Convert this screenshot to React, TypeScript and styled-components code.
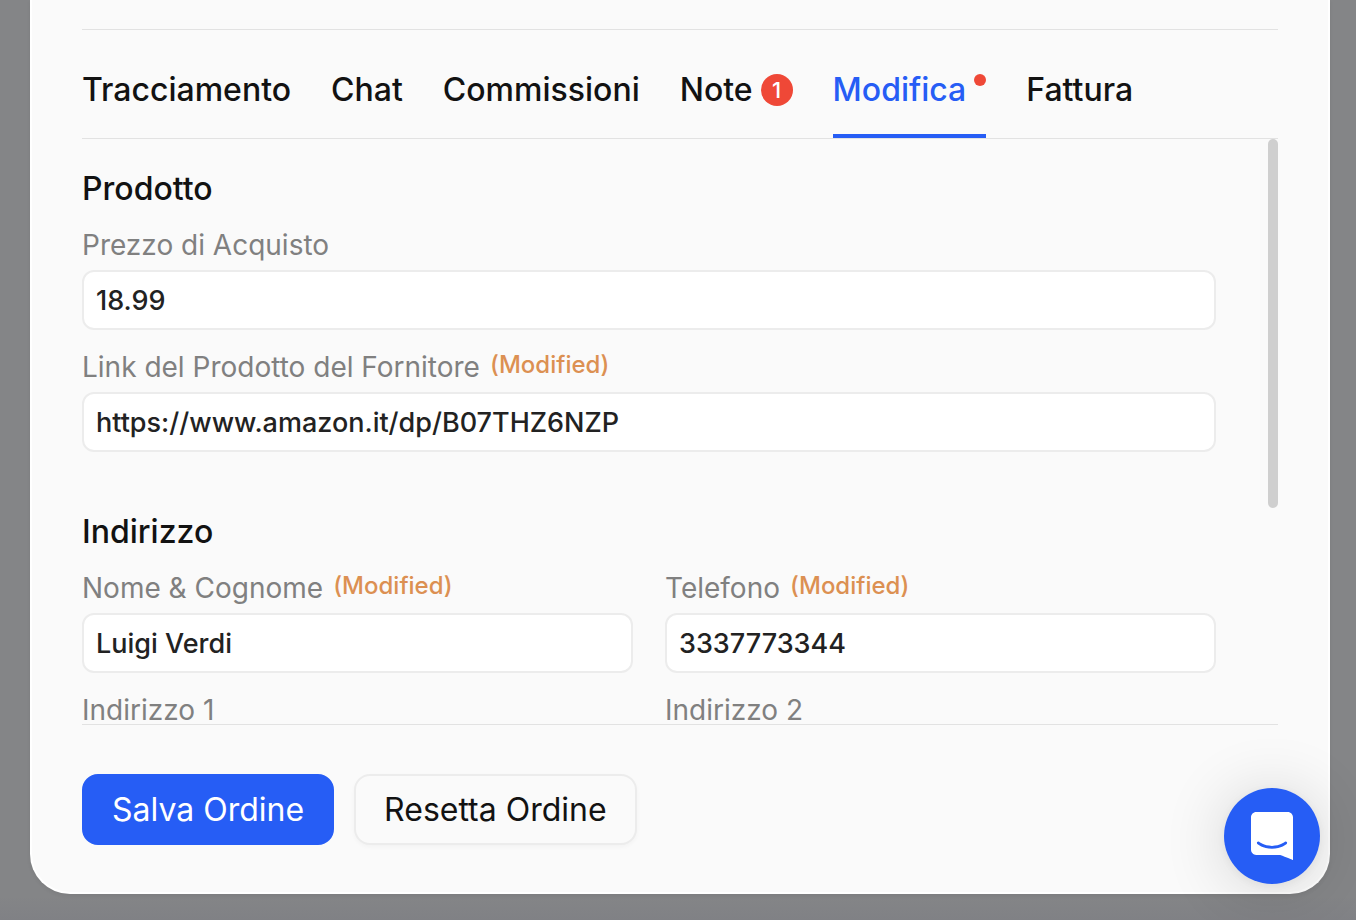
import React, { useState } from "react";
import styled, { createGlobalStyle, css } from "styled-components";

const GlobalStyle = createGlobalStyle`
  *, *::before, *::after { box-sizing: border-box; }
  body {
    margin: 0;
    background: #848587;
    font-family: Inter, "Liberation Sans", sans-serif;
    font-variant-ligatures: none;
    color: #121212;
    -webkit-font-smoothing: antialiased;
  }
  button, input {
    font-family: inherit;
    font-variant-ligatures: inherit;
  }
`;

const Backdrop = styled.div`
  min-height: 100vh;
  padding: 0 26px 26px 30px;
  background: linear-gradient(to bottom, #848587 0, #848587 calc(100% - 24px), #808185 100%);
`;

const Dialog = styled.main`
  display: flex;
  flex-direction: column;
  height: calc(100vh - 26px);
  padding: 0 50px 47px;
  background: #fafafa;
  border: 2px solid #ffffff;
  border-top: 0;
  border-radius: 0 0 40px 40px;
  box-shadow: 0 2px 4px rgba(0, 0, 0, 0.06);
`;

const Tabs = styled.div`
  display: flex;
  flex: none;
  gap: 40px;
  margin-top: 29px;
  border-top: 1px solid #e2e2e2;
  border-bottom: 1px solid #e2e2e2;
`;

const Tab = styled.button<{ $active: boolean }>`
  display: flex;
  align-items: center;
  gap: 8px;
  height: 108px;
  padding: 16px 0 0;
  border: 0;
  border-bottom: 4px solid transparent;
  background: none;
  color: #121212;
  font-size: 32px;
  line-height: 40px;
  font-weight: 500;
  white-space: nowrap;
  cursor: pointer;
  ${({ $active }) =>
    $active &&
    css`
      color: #265df5;
      border-bottom-color: #265df5;
    `}
`;

const Count = styled.span`
  display: grid;
  place-items: center;
  width: 32px;
  height: 32px;
  border-radius: 50%;
  background: #ef4837;
  color: #ffffff;
  font-size: 22px;
  line-height: 32px;
`;

const Dot = styled.span`
  width: 12px;
  height: 12px;
  margin-bottom: 20px;
  border-radius: 50%;
  background: #ef4837;
`;

const Body = styled.div`
  display: flex;
  flex: 1;
  gap: 52px;
  min-height: 0;
  border-bottom: 1px solid #e2e2e2;
`;

const Form = styled.form`
  flex: 1;
  min-width: 0;
  overflow: hidden;
  padding-top: 30px;
`;

const ScrollThumb = styled.div`
  width: 10px;
  height: 63%;
  border-radius: 5px;
  background: #cfcfcf;
`;

const Section = styled.section`
  margin-bottom: 60px;
`;

const Heading = styled.h2`
  margin: 0 0 19px;
  font-size: 32px;
  line-height: 40px;
  font-weight: 500;
`;

const Fields = styled.div<{ $columns: number }>`
  display: grid;
  grid-template-columns: repeat(${({ $columns }) => $columns}, minmax(0, 1fr));
  gap: 20px 32px;
`;

const FieldBox = styled.div`
  display: flex;
  flex-direction: column;
  gap: 8px;
`;

const LabelRow = styled.label`
  display: flex;
  align-items: flex-start;
  gap: 10px;
  color: #808080;
  font-size: 28px;
  line-height: 34px;
  white-space: nowrap;
`;

const Modified = styled.span`
  color: #dc9052;
  font-size: 24px;
  line-height: 30px;
  font-weight: 500;
`;

const TextInput = styled.input`
  width: 100%;
  height: 60px;
  padding: 0 12px;
  border: 2px solid #ececec;
  border-radius: 12px;
  background: #ffffff;
  color: #222222;
  font-size: 27px;
  font-weight: 500;
  outline: none;
`;

const Actions = styled.div`
  display: flex;
  flex: none;
  gap: 20px;
  padding-top: 49px;
`;

const ActionButton = styled.button<{ $primary?: boolean }>`
  padding: 14px 28px;
  border: 2px solid ${({ $primary }) => ($primary ? "#265df5" : "#ececec")};
  border-radius: 16px;
  background: ${({ $primary }) => ($primary ? "#265df5" : "#fafafa")};
  box-shadow: ${({ $primary }) => ($primary ? "none" : "0 2px 4px rgba(0, 0, 0, 0.03)")};
  color: ${({ $primary }) => ($primary ? "#ffffff" : "#121212")};
  font-size: 32px;
  line-height: 39px;
  white-space: nowrap;
  cursor: pointer;
`;

const Launcher = styled.button`
  position: fixed;
  right: 36px;
  bottom: 36px;
  display: grid;
  place-items: center;
  width: 96px;
  height: 96px;
  padding: 0;
  border: 0;
  border-radius: 50%;
  background: #265df5;
  box-shadow: 0 2px 12px rgba(0, 0, 0, 0.06), 0 4px 64px rgba(0, 0, 0, 0.16);
  cursor: pointer;
`;

const tabs = [
  { name: "Tracciamento" },
  { name: "Chat" },
  { name: "Commissioni" },
  { name: "Note", count: 1 },
  { name: "Modifica", changed: true },
  { name: "Fattura" },
];

type FieldProps = { id: string; label: string; value?: string; modified?: boolean };

function Field({ id, label, value = "", modified }: FieldProps) {
  return (
    <FieldBox>
      <LabelRow htmlFor={id}>
        {label}
        {modified && <Modified>(Modified)</Modified>}
      </LabelRow>
      <TextInput id={id} type="text" defaultValue={value} />
    </FieldBox>
  );
}

export default function App() {
  const [active, setActive] = useState("Modifica");
  return (
    <>
      <GlobalStyle />
      <Backdrop>
        <Dialog>
          <Tabs role="tablist">
            {tabs.map((tab) => (
              <Tab
                key={tab.name}
                type="button"
                role="tab"
                aria-selected={tab.name === active}
                $active={tab.name === active}
                onClick={() => setActive(tab.name)}
              >
                {tab.name}
                {tab.count && <Count>{tab.count}</Count>}
                {tab.changed && <Dot />}
              </Tab>
            ))}
          </Tabs>
          <Body>
            <Form id="order">
              <Section>
                <Heading>Prodotto</Heading>
                <Fields $columns={1}>
                  <Field id="price" label="Prezzo di Acquisto" value="18.99" />
                  <Field
                    id="link"
                    label="Link del Prodotto del Fornitore"
                    value="https://www.amazon.it/dp/B07THZ6NZP"
                    modified
                  />
                </Fields>
              </Section>
              <Section>
                <Heading>Indirizzo</Heading>
                <Fields $columns={2}>
                  <Field id="name" label="Nome & Cognome" value="Luigi Verdi" modified />
                  <Field id="phone" label="Telefono" value="3337773344" modified />
                  <Field id="address1" label="Indirizzo 1" />
                  <Field id="address2" label="Indirizzo 2" />
                </Fields>
              </Section>
            </Form>
            <ScrollThumb />
          </Body>
          <Actions>
            <ActionButton type="button" $primary>
              Salva Ordine
            </ActionButton>
            <ActionButton type="reset" form="order">
              Resetta Ordine
            </ActionButton>
          </Actions>
        </Dialog>
      </Backdrop>
      <Launcher type="button" aria-label="Chat">
        <svg width="42" height="48" viewBox="0 0 28 32" fill="#ffffff" aria-hidden="true">
          <path d="M28 32s-4.714-1.855-8.527-3.34H3.437C1.54 28.66 0 27.026 0 25.013V3.644C0 1.633 1.54 0 3.437 0h21.125c1.898 0 3.437 1.632 3.437 3.645v18.404H28V32zm-4.139-11.982a.88.88 0 00-1.292-.105c-.03.026-3.015 2.681-8.57 2.681-5.486 0-8.517-2.636-8.571-2.684a.88.88 0 00-1.29.107 1.01 1.01 0 00-.219.708.992.992 0 00.318.664c.142.128 3.537 3.15 9.762 3.15 6.226 0 9.621-3.022 9.763-3.15a.992.992 0 00.317-.664 1.01 1.01 0 00-.218-.707z" />
        </svg>
      </Launcher>
    </>
  );
}
